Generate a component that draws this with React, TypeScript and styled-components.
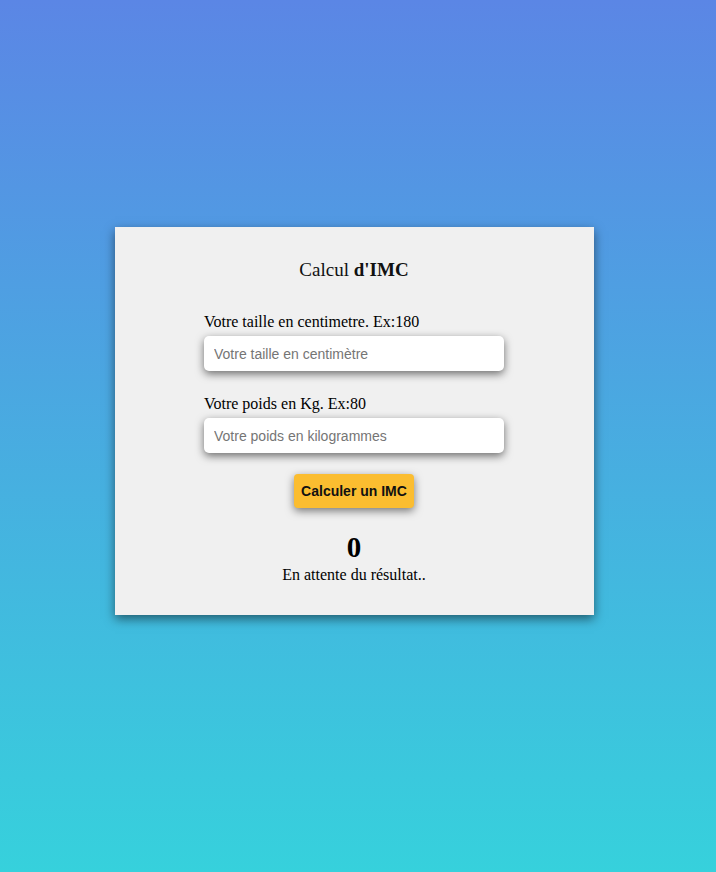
import styled, { createGlobalStyle } from 'styled-components';

const GlobalStyle = createGlobalStyle`
  html, body {
    margin: 0;
    padding: 0;
  }
  body {
    min-height: 100vh;
    background: linear-gradient(to bottom, #5b86e5, #36d1dc);
    font-family: "Liberation Serif", "Times New Roman", serif;
  }
`;

const Page = styled.div`
  min-height: 100vh;
  display: flex;
  justify-content: center;
  align-items: flex-start;
  padding: 227px 7px 0 0;
  box-sizing: border-box;
`;

const Card = styled.div`
  width: 479px;
  height: 388px;
  box-sizing: border-box;
  background: #f0f0f0;
  box-shadow: 0 4px 10px rgba(0, 0, 0, 0.5);
  display: flex;
  flex-direction: column;
  align-items: center;
  padding: 32px 1px 0 0;
`;

const Title = styled.h2`
  margin: 0;
  font-size: 19px;
  font-weight: normal;
  line-height: 22px;
  color: #111;
`;

const Form = styled.form`
  width: 300px;
  display: flex;
  flex-direction: column;
  align-items: stretch;
  margin-top: 32px;
`;

const Field = styled.div`
  display: flex;
  flex-direction: column;
  gap: 5px;
  margin-bottom: 24px;
`;

const Label = styled.label`
  font-size: 16px;
  line-height: 18px;
  color: #000;
`;

const Input = styled.input`
  height: 35px;
  box-sizing: border-box;
  border: none;
  border-radius: 5px;
  background: #fff;
  padding: 0 10px;
  font-family: "Liberation Sans", Arial, sans-serif;
  font-size: 14px;
  box-shadow: 0 3px 8px rgba(0, 0, 0, 0.55);
  outline: none;
  &::placeholder {
    color: #757575;
  }
`;

const Button = styled.button`
  align-self: center;
  width: 120px;
  height: 34px;
  margin-top: -3px;
  border: none;
  border-radius: 4px;
  background: #fbbd30;
  color: #111;
  font-family: "Liberation Sans", Arial, sans-serif;
  font-weight: bold;
  font-size: 14px;
  box-shadow: 0 3px 8px rgba(0, 0, 0, 0.5);
  cursor: pointer;
`;

const Result = styled.div`
  margin-top: 24px;
  display: flex;
  flex-direction: column;
  align-items: center;
`;

const Score = styled.div`
  font-size: 29px;
  font-weight: bold;
  line-height: 30px;
  color: #000;
`;

const Status = styled.div`
  font-size: 16px;
  line-height: 18px;
  margin-top: 4px;
  color: #000;
`;

function App() {
  return (
    <>
      <GlobalStyle />
      <Page>
        <Card>
          <Title>
            Calcul <b>d'IMC</b>
          </Title>
          <Form onSubmit={e => e.preventDefault()}>
            <Field>
              <Label>Votre taille en centimetre. Ex:180</Label>
              <Input type="text" placeholder="Votre taille en centimètre" />
            </Field>
            <Field>
              <Label>Votre poids en Kg. Ex:80</Label>
              <Input type="text" placeholder="Votre poids en kilogrammes" />
            </Field>
            <Button type="submit">Calculer un IMC</Button>
          </Form>
          <Result>
            <Score>0</Score>
            <Status>En attente du résultat..</Status>
          </Result>
        </Card>
      </Page>
    </>
  );
}

export default App;
